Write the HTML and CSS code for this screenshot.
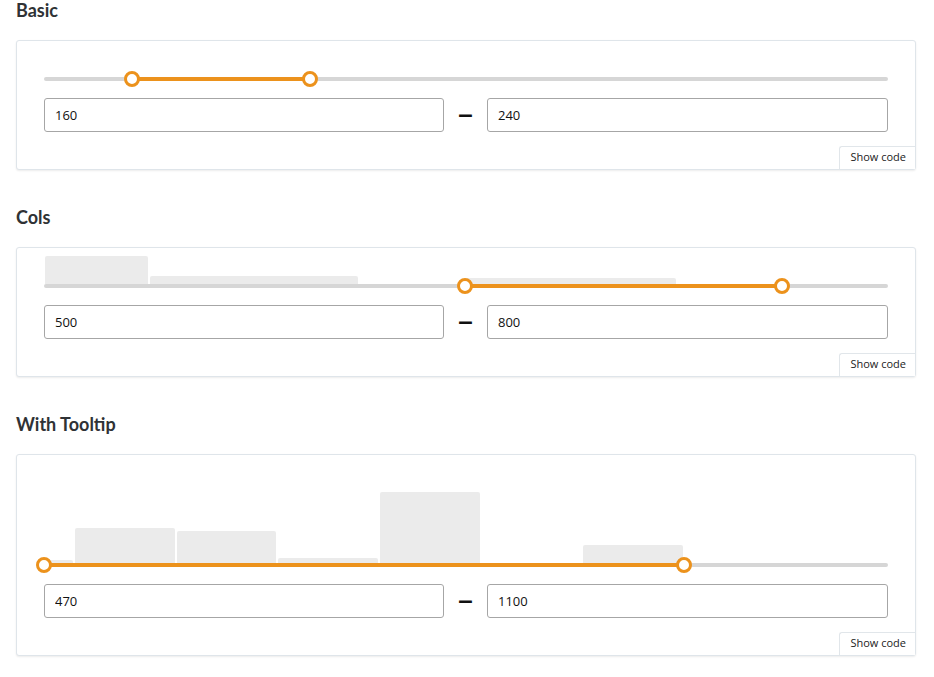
FILE: index.html
```html
<!DOCTYPE html>
<html lang="en">
<head>
<meta charset="utf-8">
<title>Range slider</title>
<link rel="stylesheet" href="styles.css">
</head>
<body>
  <section class="demo">
    <h2 class="demo-title">Basic</h2>
    <div class="card">
      <div class="slider">
        <div class="chart"></div>
        <div class="track-row">
          <div class="track"></div>
          <div class="fill" style="left:88px;width:178px"></div>
          <div class="handle" style="left:88px"></div>
          <div class="handle" style="left:266px"></div>
        </div>
      </div>
      <div class="inputs">
        <input class="num" type="text" value="160">
        <span class="dash">–</span>
        <input class="num" type="text" value="240">
      </div>
      <div class="footer"><button class="show-code">Show code</button></div>
    </div>
  </section>

  <section class="demo">
    <h2 class="demo-title">Cols</h2>
    <div class="card">
      <div class="slider">
        <div class="chart chart-cols">
          <div class="bar" style="width:103px;height:28px"></div>
          <div class="bar" style="width:208px;height:8px"></div>
          <div class="bar" style="width:103px;height:0"></div>
          <div class="bar" style="width:211px;height:6px"></div>
        </div>
        <div class="track-row">
          <div class="track"></div>
          <div class="fill" style="left:421px;width:317px"></div>
          <div class="handle" style="left:421px"></div>
          <div class="handle" style="left:738px"></div>
        </div>
      </div>
      <div class="inputs">
        <input class="num" type="text" value="500">
        <span class="dash">–</span>
        <input class="num" type="text" value="800">
      </div>
      <div class="footer"><button class="show-code">Show code</button></div>
    </div>
  </section>

  <section class="demo">
    <h2 class="demo-title">With Tooltip</h2>
    <div class="card">
      <div class="slider slider-tooltip">
        <div class="chart chart-tall">
          <div class="bar" style="width:29px;height:3px"></div>
          <div class="bar" style="width:100px;height:35px"></div>
          <div class="bar" style="width:99px;height:32px"></div>
          <div class="bar" style="width:100px;height:5px"></div>
          <div class="bar" style="width:100px;height:71px"></div>
          <div class="bar" style="width:99px;height:0"></div>
          <div class="bar" style="width:100px;height:18px"></div>
        </div>
        <div class="track-row">
          <div class="track"></div>
          <div class="fill" style="left:0;width:640px"></div>
          <div class="handle" style="left:0"></div>
          <div class="handle" style="left:640px"></div>
        </div>
      </div>
      <div class="inputs">
        <input class="num" type="text" value="470">
        <span class="dash">–</span>
        <input class="num" type="text" value="1100">
      </div>
      <div class="footer"><button class="show-code">Show code</button></div>
    </div>
  </section>
</body>
</html>
```
FILE: styles.css
```css
html, body {
  margin: 0;
  padding: 0;
  background: #ffffff;
}

body {
  padding: 0 18px 0 16px;
  font-family: "Open Sans", "Liberation Sans", sans-serif;
  color: #333;
}

.demo {
  margin-bottom: 37px;
}

.demo-title {
  margin: 0 0 20px;
  font-family: Lato, "Open Sans", sans-serif;
  font-weight: 700;
  font-size: 18px;
  line-height: 20px;
  color: #2f3235;
}

.card {
  width: 900px;
  box-sizing: border-box;
  border: 1px solid #dfe5ea;
  border-radius: 3px;
  box-shadow: 0 1px 2px rgba(0, 0, 0, 0.08);
  padding: 8px 27px 0;
  background: #fff;
}

.slider {
  display: flex;
  flex-direction: column;
}

.slider-tooltip {
  padding-top: 28px;
}

.chart {
  height: 28px;
  margin-bottom: -8px;
  display: flex;
  align-items: flex-end;
  gap: 2px;
}

.chart-cols {
  padding-left: 1px;
}

.chart-tall {
  height: 72px;
}

.bar {
  background: #ebebeb;
  border-radius: 2px 2px 0 0;
  flex: none;
}

.track-row {
  position: relative;
  height: 20px;
}

.track {
  position: absolute;
  left: 0;
  right: 0;
  top: 8px;
  height: 4px;
  border-radius: 2px;
  background: #d6d6d6;
}

.fill {
  position: absolute;
  top: 8px;
  height: 4px;
  background: #ec921c;
}

.handle {
  position: absolute;
  top: 2px;
  width: 16px;
  height: 16px;
  margin-left: -8px;
  box-sizing: border-box;
  border: 3px solid #ec921c;
  border-radius: 50%;
  background: #fff;
}

.inputs {
  margin-top: 9px;
  display: grid;
  grid-template-columns: 400px 43px 1fr;
  align-items: center;
}

.num {
  box-sizing: border-box;
  height: 34px;
  margin: 0;
  padding: 0 10px;
  border: 1px solid #a6a6a6;
  border-radius: 3px;
  font-family: "Open Sans", "Liberation Sans", sans-serif;
  font-size: 13px;
  color: #111;
  background: #fff;
  outline: none;
}

.dash {
  text-align: center;
  font-family: "Liberation Sans", sans-serif;
  font-size: 26px;
  font-weight: 700;
  line-height: 20px;
  padding-bottom: 2px;
  color: #111;
}

.footer {
  margin-top: 14px;
  margin-right: -27px;
  display: flex;
  justify-content: flex-end;
}

.show-code {
  display: block;
  box-sizing: border-box;
  height: 23px;
  padding: 0 9px 2px 10px;
  border: 1px solid #e1e6ea;
  border-right: none;
  border-bottom: none;
  border-radius: 3px 0 0 0;
  background: #fff;
  font-family: "Open Sans", "Liberation Sans", sans-serif;
  font-size: 11px;
  line-height: 20px;
  color: #222;
  cursor: pointer;
}
```
